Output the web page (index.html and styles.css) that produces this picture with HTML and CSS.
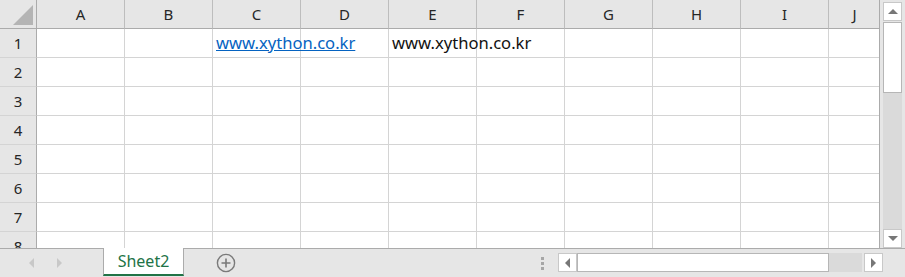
FILE: index.html
```html
<!DOCTYPE html>
<html lang="ko">
<head>
    <meta charset="UTF-8" />
    <title>Sheet2</title>
    <link rel="stylesheet" href="styles.css">
</head>
<body>
    <div class="app">
        <div class="top">
            <div class="sheet">
                <div class="row head">
                    <div class="corner"><span class="tri"></span></div>
                    <div class="col">A</div>
                    <div class="col">B</div>
                    <div class="col">C</div>
                    <div class="col">D</div>
                    <div class="col">E</div>
                    <div class="col">F</div>
                    <div class="col">G</div>
                    <div class="col">H</div>
                    <div class="col">I</div>
                    <div class="col last">J</div>
                </div>
                <div id="rows"></div>
            </div>
            <div class="vscroll">
                <div class="btn up"><span class="arr-up"></span></div>
                <div class="vthumb"></div>
                <div class="vtrack"></div>
                <div class="btn down"><span class="arr-down"></span></div>
            </div>
        </div>
        <div class="bottom">
            <div class="nav">
                <span class="arr-left light"></span>
                <span class="arr-right light"></span>
            </div>
            <div class="tab">Sheet2</div>
            <div class="add">
                <svg width="20" height="20" viewBox="0 0 20 20">
                    <circle cx="10" cy="10" r="8.6" fill="none" stroke="#7a7a7a" stroke-width="1.4" />
                    <path d="M10 5.5v9M5.5 10h9" stroke="#7a7a7a" stroke-width="1.6" />
                </svg>
            </div>
            <div class="spacer"></div>
            <div class="dots"><i></i><i></i><i></i></div>
            <div class="hscroll">
                <div class="btn hbtn"><span class="arr-left"></span></div>
                <div class="hthumb"></div>
                <div class="htrack"></div>
                <div class="btn hbtn"><span class="arr-right"></span></div>
            </div>
        </div>
    </div>

    <script>
        const rowsEl = document.getElementById("rows");
        const cells = {
            1: { C: '<a class="link" href="#">www.xython.co.kr</a>', E: 'www.xython.co.kr' }
        };
        const cols = "ABCDEFGHIJ".split("");

        for (let r = 1; r <= 8; r++) {
            let html = `<div class="row"><div class="num">${r}</div>`;
            cols.forEach(c => {
                const v = (cells[r] && cells[r][c]) || "";
                html += `<div class="cell${c === "J" ? " last" : ""}">${v}</div>`;
            });
            html += "</div>";
            rowsEl.insertAdjacentHTML("beforeend", html);
        }
    </script>
</body>
</html>
```

FILE: styles.css
```css
body {
    margin: 0;
    background: #e6e6e6;
    font-family: 'Noto Sans', 'Open Sans', sans-serif;
    color: #222;
}

.app {
    width: 905px;
    height: 277px;
    overflow: hidden;
}

.top {
    display: flex;
    height: 248px;
}

.sheet {
    width: 880px;
    height: 248px;
    overflow: hidden;
    background: white;
    border-right: 1px solid #ababab;
    box-sizing: border-box;
}

.row {
    display: grid;
    grid-template-columns: 37px repeat(9, 88px) 51px;
    height: 29px;
}

.row > div {
    box-sizing: border-box;
    border-right: 1px solid #d4d4d4;
    border-bottom: 1px solid #d4d4d4;
    white-space: nowrap;
    font-size: 15px;
    line-height: 28px;
}

.row > div.last {
    border-right: none;
}

.head > div {
    background: #e6e6e6;
    border-right-color: #ababab;
    border-bottom-color: #ababab;
    text-align: center;
    color: #262626;
}

.head > div.col {
    border-right-color: #bdbdbd;
}

.corner {
    position: relative;
}

.corner .tri {
    position: absolute;
    right: 3px;
    bottom: 3px;
    width: 0;
    height: 0;
    border-left: 20px solid transparent;
    border-bottom: 20px solid #b4b4b4;
}

.row > div.num {
    background: #e6e6e6;
    border-right-color: #ababab;
    border-bottom-color: #d4d4d4;
    text-align: center;
    color: #262626;
}

.row > div.cell {
    padding-left: 3px;
    overflow: visible;
    position: relative;
    z-index: 1;
    color: #111;
    font-size: 16.6px;
}

.link {
    color: #0563c1;
    text-decoration: underline;
}

/* vertical scrollbar */
.vscroll {
    width: 19px;
    margin: 2px 0 0 3px;
    display: flex;
    flex-direction: column;
}

.btn {
    box-sizing: border-box;
    background: white;
    border: 1px solid #c8c8c8;
    display: flex;
    align-items: center;
    justify-content: center;
}

.up,
.down {
    height: 19px;
}

.vthumb {
    height: 71px;
    background: white;
    border: 1px solid #b6b6b6;
    margin-top: 1px;
    box-sizing: border-box;
}

.vtrack {
    flex: 1;
    background: #dadada;
}

.arr-up {
    border-left: 5px solid transparent;
    border-right: 5px solid transparent;
    border-bottom: 5px solid #777;
}

.arr-down {
    border-left: 5px solid transparent;
    border-right: 5px solid transparent;
    border-top: 5px solid #777;
}

.arr-left {
    border-top: 5px solid transparent;
    border-bottom: 5px solid transparent;
    border-right: 5px solid #777;
}

.arr-right {
    border-top: 5px solid transparent;
    border-bottom: 5px solid transparent;
    border-left: 5px solid #777;
}

/* bottom bar */
.bottom {
    display: flex;
    align-items: flex-start;
    height: 29px;
    border-top: 1px solid #ababab;
    box-sizing: border-box;
}

.nav {
    width: 103px;
    height: 28px;
    display: flex;
    align-items: center;
    gap: 23px;
    padding-left: 29px;
    box-sizing: border-box;
}

.nav .light {
    border-right-color: #c8c8c8;
    border-left-color: #c8c8c8;
}

.tab {
    width: 79px;
    height: 26px;
    margin-top: -1px;
    background: white;
    border-left: 1px solid #ababab;
    border-right: 1px solid #ababab;
    border-bottom: 2px solid #217346;
    box-sizing: content-box;
    color: #217346;
    font-size: 16px;
    line-height: 26px;
    text-align: center;
}

.add {
    margin-left: 32px;
    height: 28px;
    display: flex;
    align-items: center;
}

.spacer {
    flex: 1;
}

.dots {
    display: flex;
    flex-direction: column;
    gap: 2px;
    margin-top: 8px;
    margin-right: 14px;
}

.dots i {
    display: block;
    width: 3px;
    height: 3px;
    background: #a6a6a6;
}

.hscroll {
    display: flex;
    height: 19px;
    margin-top: 4px;
    margin-right: 22px;
}

.hbtn {
    width: 19px;
    height: 19px;
}

.hthumb {
    width: 252px;
    height: 19px;
    box-sizing: border-box;
    background: white;
    border: 1px solid #b6b6b6;
}

.htrack {
    width: 33px;
    margin-right: 2px;
    background: #dadada;
}
```
